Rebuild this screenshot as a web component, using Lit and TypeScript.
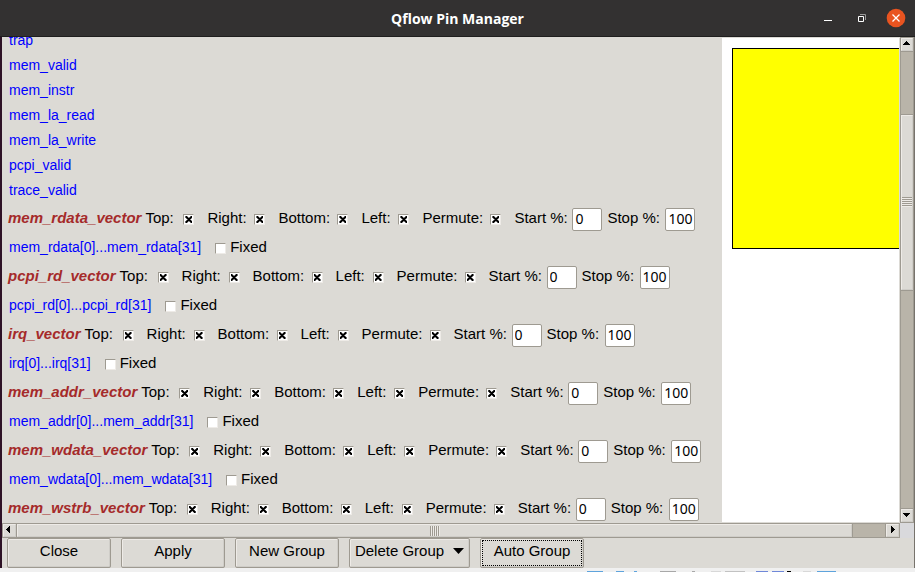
import { LitElement, html, css, nothing } from "lit";
import { customElement, property } from "lit/decorators.js";

const SIGNALS = ["trap", "mem_valid", "mem_instr", "mem_la_read", "mem_la_write", "pcpi_valid", "trace_valid"];
const GROUPS = [
  { name: "mem_rdata_vector", range: "mem_rdata[0]...mem_rdata[31]" },
  { name: "pcpi_rd_vector", range: "pcpi_rd[0]...pcpi_rd[31]" },
  { name: "irq_vector", range: "irq[0]...irq[31]" },
  { name: "mem_addr_vector", range: "mem_addr[0]...mem_addr[31]" },
  { name: "mem_wdata_vector", range: "mem_wdata[0]...mem_wdata[31]" },
  { name: "mem_wstrb_vector", range: "" },
];
const SIDES = ["Top", "Right", "Bottom", "Left", "Permute"];

@customElement("pin-group")
export class PinGroup extends LitElement {
  @property() name = "";
  @property() range = "";

  static styles = css`
    :host { display: block; }
    .row { display: flex; align-items: center; height: 29px; white-space: nowrap; }
    .name { color: #a52a2a; font-size: 15px; font-style: italic; font-weight: bold; margin: 0 4px 0 6px; }
    .field { display: flex; align-items: center; justify-content: space-between; box-sizing: border-box; flex: none; padding-right: 13px; }
    .Top { width: 62px; }
    .Right { width: 71px; }
    .Bottom { width: 83px; }
    .Left { width: 61px; }
    .Permute { width: 92px; }
    .number { width: 88px; padding: 0; margin-right: 5px; }
    .check {
      appearance: none; box-sizing: border-box; flex: none; width: 11px; height: 11px; margin: 4px 0 0;
      background: #fff; border: 1px solid; border-color: #9e9a91 #eeebe7 #eeebe7 #9e9a91;
      display: grid; place-items: center;
    }
    .check:checked::before {
      content: ""; width: 7px; height: 7px; background: #000;
      clip-path: polygon(0 0, 2px 0, 2px 1px, 3px 1px, 3px 2px, 4px 2px, 4px 1px, 5px 1px, 5px 0, 7px 0, 7px 2px, 6px 2px, 6px 3px, 5px 3px, 5px 4px, 6px 4px, 6px 5px, 7px 5px, 7px 7px, 5px 7px, 5px 6px, 4px 6px, 4px 5px, 3px 5px, 3px 6px, 2px 6px, 2px 7px, 0 7px, 0 5px, 1px 5px, 1px 4px, 2px 4px, 2px 3px, 1px 3px, 1px 2px, 0 2px);
    }
    .entry {
      box-sizing: border-box; width: 30px; height: 23px; padding: 0 0 2px 2px; margin: 4px 0 0;
      border: 1px solid #9e9a91; border-radius: 2px; background: #fff; color: #000;
      font: 14px "Noto Sans", sans-serif; outline: none;
    }
    .signal { color: #00f; font-size: 14px; text-decoration: none; margin: 0 14px 0 7px; }
    .fixed { display: flex; align-items: center; gap: 4px; }
  `;

  render() {
    return html`
      <div class="row">
        <span class="name">${this.name}</span>
        ${SIDES.map((s) => html`<label class="field ${s}">${s}:<input class="check" type="checkbox" checked></label>`)}
        <label class="field number">Start %:<input class="entry" value="0"></label>
        <label class="field number">Stop %:<input class="entry" value="100"></label>
      </div>
      ${this.range
        ? html`<div class="row">
            <a class="signal" href="#">${this.range}</a>
            <label class="fixed"><input class="check" type="checkbox">Fixed</label>
          </div>`
        : nothing}`;
  }
}

@customElement("app-root")
export class AppRoot extends LitElement {
  static styles = css`
    :host { display: flex; flex-direction: column; height: 100vh; overflow: hidden; background: #f0f0f0; color: #000; font: 15px/18px "Liberation Sans", Arial, sans-serif; }
    button { font: inherit; color: inherit; padding: 0; }
    .titlebar { display: grid; grid-template-columns: 1fr auto 1fr; align-items: center; flex: none; height: 37px; box-sizing: border-box; background: #333131; border-bottom: 1px solid #1f1e1e; color: #fff; }
    .title { grid-column: 2; margin: 0; font: bold 14px "Open Sans", "Noto Sans", sans-serif; }
    .controls { display: flex; justify-content: flex-end; gap: 14px; padding-right: 9px; }
    .control { display: block; width: 20px; height: 20px; border: 0; background: none; }
    .window { display: flex; flex-direction: column; flex: 1; min-height: 0; background: #dcdad5; border-left: 2px solid #2e1226; border-right: 1px solid #77736c; }
    .view { display: grid; grid-template-columns: minmax(0, 1fr) 14px; grid-template-rows: minmax(0, 1fr) 15px; flex: 1; min-height: 0; }
    .content { display: grid; grid-template-columns: 720px minmax(0, 1fr); overflow: hidden; }
    .list { margin-top: -9px; min-width: 0; }
    .items { display: block; }
    .item { display: block; height: 25px; line-height: 25px; padding-left: 7px; color: #00f; font-size: 14px; text-decoration: none; }
    .canvas { background: #fff; margin: 1px 1px 1px 0; padding: 10px 0 0 10px; overflow: hidden; }
    .die { height: 201px; box-sizing: border-box; background: #ff0; border: 1px solid #000; border-right: 0; }
    .bar { display: flex; background: #b9b4a9; border: 1px solid #9e9a91; box-sizing: border-box; }
    .vertical { flex-direction: column; }
    .arrow, .thumb, .push { background: #dcdad5; border: 1px solid; border-color: #eeebe7 #cfcdc8 #cfcdc8 #eeebe7; box-sizing: border-box; }
    .arrow { display: grid; place-items: start; flex: none; width: 12px; height: 13px; outline: 1px solid #9e9a91; }
    .horizontal .arrow { width: 13px; }
    .arrow svg { display: block; }
    .thumb { display: grid; place-items: center; outline: 1px solid #9e9a91; }
    .vertical .before { flex: 64; }
    .vertical .thumb { flex: 174; }
    .vertical .after { flex: 220; }
    .horizontal .thumb { flex: 837; margin-left: 1px; }
    .horizontal .after { flex: 34; }
    .grip { width: 10px; height: 10px; }
    .vertical .grip { background: repeating-linear-gradient(#9e9a91 0 1px, #eeebe7 1px 2px); }
    .horizontal .grip { background: repeating-linear-gradient(90deg, #9e9a91 0 1px, #eeebe7 1px 2px); }
    .corner { background: #d9d9dc; }
    .buttons { display: flex; gap: 10px; height: 30px; flex: none; padding-left: 5px; }
    .push { width: 104px; height: 30px; flex: none; padding-bottom: 4px; outline: 1px solid #9e9a91; outline-offset: -1px; border: 2px solid; border-color: #eeebe7 #cfcdc8 #cfcdc8 #eeebe7; border-radius: 2px; }
    .menu { width: 121px; display: flex; align-items: center; justify-content: center; gap: 9px; }
    .focus { display: grid; place-items: center; padding: 0; }
    .ring { width: 100px; height: 26px; padding-bottom: 4px; display: grid; place-items: center; border: 1px dotted #000; box-sizing: border-box; }
    .behind { flex: none; height: 4px; overflow: hidden; }
    .behind svg { display: block; }
  `;

  arrow(d: string, label: string) {
    return html`<button class="arrow" aria-label=${label}><svg width="9" height="9" viewBox="0 0 9 9" shape-rendering="crispEdges"><path d=${d} /></svg></button>`;
  }

  render() {
    return html`
      <header class="titlebar">
        <h1 class="title">Qflow Pin Manager</h1>
        <div class="controls">
          <button class="control" aria-label="Minimize"><svg width="20" height="20"><path d="M6 12h8v1H6z" fill="#fff" /></svg></button>
          <button class="control" aria-label="Restore"><svg width="20" height="20" fill="none"><path d="M8 6.500H13.500V12" stroke="#999" /><path d="M6.500 8.500h5v5h-5z" stroke="#fff" /></svg></button>
          <button class="control" aria-label="Close"><svg width="20" height="20"><circle cx="10" cy="10" r="9.300" fill="#e95420" /><path d="M6.500 6.500l7 7M13.500 6.500l-7 7" stroke="#fff" stroke-width="1.300" /></svg></button>
        </div>
      </header>
      <main class="window">
        <div class="view">
          <div class="content">
            <div class="list">
              <nav class="items">${SIGNALS.map((s) => html`<a class="item" href="#">${s}</a>`)}</nav>
              ${GROUPS.map((g) => html`<pin-group name=${g.name} range=${g.range}></pin-group>`)}
            </div>
            <div class="canvas"><div class="die"></div></div>
          </div>
          <div class="bar vertical">
            ${this.arrow("M4 2h1v1h1v1h1v1h1v1H1V5h1V4h1V3h1z", "Scroll up")}
            <div class="before"></div>
            <div class="thumb"><div class="grip"></div></div>
            <div class="after"></div>
            ${this.arrow("M1 3h7v1H7v1H6v1H5v1H4V6H3V5H2V4H1z", "Scroll down")}
          </div>
          <div class="bar horizontal">
            ${this.arrow("M6 1v7H5V7H4V6H3V5H2V4h1V3h1V2h1V1z", "Scroll left")}
            <div class="thumb"><div class="grip"></div></div>
            <div class="after"></div>
            ${this.arrow("M4 1v7h1V7h1V6h1V5h1V4H7V3H6V2H5V1z", "Scroll right")}
          </div>
          <div class="corner"></div>
        </div>
        <footer class="buttons">
          <button class="push">Close</button>
          <button class="push">Apply</button>
          <button class="push">New Group</button>
          <button class="push menu">Delete Group<svg width="11" height="6"><path d="M0 0h11L5.500 6z" /></svg></button>
          <button class="push focus"><span class="ring">Auto Group</span></button>
        </footer>
      </main>
      <div class="behind">
        <svg width="915" height="4" aria-hidden="true">
          <path d="M587 3h16v1h-16zM616 3h8v1h-8zM634 3h3v1h-3zM817 3h19v1h-19z" fill="#5ea3dc" />
          <path d="M660 3h16v1h-16zM692 3h3v1h-3z" fill="#a8a8a8" />
          <path d="M725 3h20v1h-20z" fill="#c2c2c2" />
          <path d="M711 3h10v1h-10zM803 3h8v1h-8z" fill="#d8d8d8" />
          <path d="M756 3h12v1h-12zM772 3h12v1h-12z" fill="#6f88d8" />
          <path d="M787 3h4v1h-4z" fill="#000" />
        </svg>
      </div>`;
  }
}
